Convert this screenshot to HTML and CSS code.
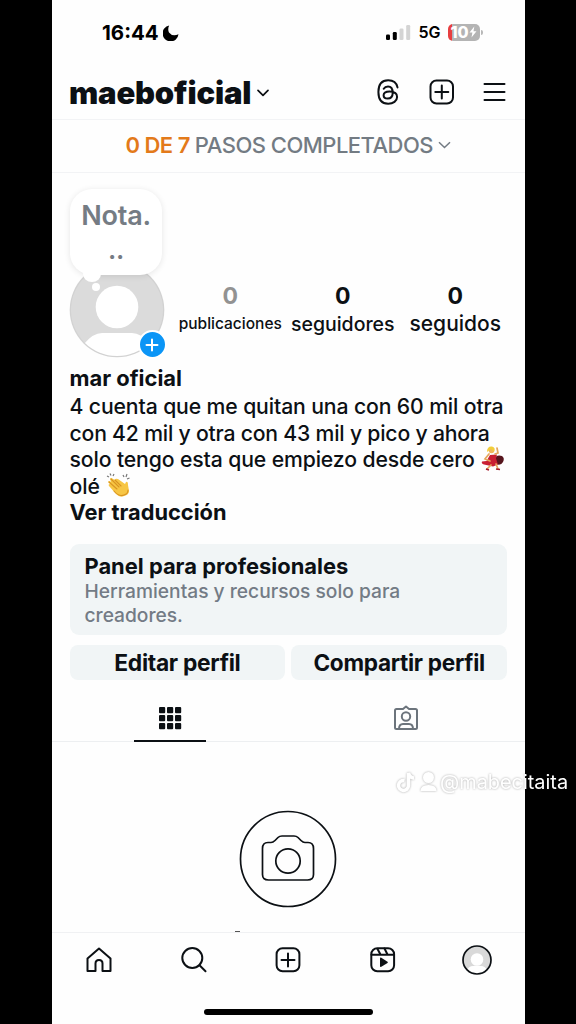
FILE: index.html
```html
<!DOCTYPE html>
<html lang="es">
<head>
<meta charset="utf-8">
<title>maeboficial</title>
<link rel="stylesheet" href="styles.css">
</head>
<body>
<main class="phone">
  <div class="status">
    <div class="clock"><span class="time">16:44</span>
      <svg class="moon" width="16" height="16" viewBox="0 0 16 16"><path d="M6.2.5A8 8 0 0 0 6 7.500Q9.500 12 15.500 9.300A8 8 0 1 1 6.200.5Z" fill="#000"/></svg>
    </div>
    <div class="signals">
      <svg width="25" height="17" viewBox="0 0 25 17"><rect x="0" y="10.500" width="4" height="5.500" rx="1.300" fill="#000"/><rect x="6.800" y="8" width="4" height="8" rx="1.300" fill="#000"/><rect x="13.500" y="4.500" width="4" height="11.500" rx="1.300" fill="#d4d4d4"/><rect x="20.200" y="1" width="4" height="15" rx="1.300" fill="#d4d4d4"/></svg>
      <span class="network">5G</span>
      <div class="battery"><span class="level">10</span><svg width="8" height="12" viewBox="0 0 8 12"><path d="M5.300.5.500 6.600h2.900L2.500 11.500 7.500 5.200H4.500Z" fill="#fff"/></svg></div>
      <span class="cap"></span>
    </div>
  </div>

  <header class="header">
    <h1 class="username">maeboficial</h1>
    <svg class="chevron" width="12" height="8" viewBox="0 0 12 8"><path d="M1 1.300 6 6.300l5-5" class="line"/></svg>
    <div class="actions">
      <svg width="22" height="26" viewBox="0 0 22 26"><path class="line bold" d="M20.500 8.400C19.500 3.600 16.300 1.300 11.200 1.300 4.700 1.300 1.400 5.500 1.400 13s3.300 11.700 9.800 11.700c5 0 8.900-2.500 8.900-6.600 0-3.500-3-5.500-7.500-5.500-4 0-6 1.500-6 3.700 0 2 1.700 3.300 4 3.300 3.300 0 5.100-2.200 5.100-5.800 0-4-1.500-6.300-4.700-6.300-1.900 0-3.400.8-4.300 2.200"/></svg>
      <svg width="26" height="26" viewBox="0 0 26 26"><rect class="line bold" x="1.500" y="1.500" width="22.500" height="23" rx="6"/><path class="line bold" d="M12.800 6.500v13M6.300 13h13"/></svg>
      <svg width="23" height="20" viewBox="0 0 23 20"><path class="line bold" d="M1.500 2h20M1.500 10h20M1.500 18h20"/></svg>
    </div>
  </header>

  <div class="steps"><span class="done">0 DE 7</span><span class="total">PASOS COMPLETADOS</span>
    <svg width="13" height="8" viewBox="0 0 13 8"><path d="M1 1.200 6.500 6.500 12 1.200" fill="none" stroke="#737b83" stroke-width="1.500"/></svg>
  </div>

  <section class="profile">
    <div class="summary">
      <div class="avatar">
        <svg width="96" height="96" viewBox="0 0 96 96"><defs><clipPath id="face"><circle cx="48" cy="48" r="46"/></clipPath></defs><circle cx="48" cy="48" r="47.300" fill="#d2d2d2"/><g clip-path="url(#face)"><circle cx="48" cy="48" r="46.500" fill="#dbdbdb"/><circle cx="48" cy="45" r="21.300" fill="#fff"/><path d="M15 82Q24 71 33 71h30q9 0 18 11L70 100H26Z" fill="#fff"/></g></svg>
        <div class="note"><span class="note-text">Nota.</span><span class="note-text dots">..</span></div>
        <span class="tail"></span><span class="bubble"></span>
        <span class="add"><svg width="14" height="14" viewBox="0 0 14 14"><path d="M7 1.500v11M1.500 7h11" stroke="#fff" stroke-width="2" stroke-linecap="round"/></svg></span>
      </div>
      <div class="stats">
        <div class="stat muted"><b>0</b><span class="label posts">publicaciones</span></div>
        <div class="stat"><b>0</b><span class="label followers">seguidores</span></div>
        <div class="stat"><b>0</b><span class="label following">seguidos</span></div>
      </div>
    </div>
    <h2 class="name">mar oficial</h2>
    <p class="bio"><span class="row l1">4 cuenta que me quitan una con 60 mil otra</span><span class="row l2">con 42 mil y otra con 43 mil y pico y ahora</span><span class="row l3">solo tengo esta que empiezo desde cero<svg class="emoji dancer" width="24" height="26" viewBox="0 0 24 26"><path d="M12 13Q16 8 21 10q3 2 1 6-2 4-7 2Z" fill="#56151d"/><path d="M9 9 5.500 15 1 15.500q-1 2 2 3l9 2 5-2-2-6 1-4Z" fill="#c91f32"/><path d="m8 8-4 5 5 2M14 8l3-1-1-5M15 18l2 5M10 19l-4 4" fill="none" stroke="#e4a55b" stroke-width="1.700" stroke-linecap="round"/><circle cx="10.500" cy="4.500" r="2.800" fill="#efb65d"/><path d="M6 6Q6 0 11 .5q4 1 2 5L10 3Z" fill="#f2ce3b"/><path d="m15 23 4 .5M5 23l3 1" stroke="#a5172a" stroke-width="1.600"/></svg></span><span class="row l4">olé<svg class="emoji clap" width="24" height="25" viewBox="0 0 24 25"><path d="M2 9q1-2 3 0L4 6q1-2 3 0l2 1q0-2 3-1l7 5 1-2q2-1 2 3l1 6q0 4-5 5-4 2-8-2l-7-8q-1-2 1-2Z" fill="#f7c644"/><path d="m3 9 8 7M5 6l8 8M9 7l6 6M8 18q5 6 10 4 4-1 4-5" fill="none" stroke="#d99423" stroke-width="1.100" stroke-linecap="round"/><path d="m1 3 2 1M4 .5l1 2M8 1 7 3M17 2l1 2M21 1l-1 3M23.500 5 21 6" stroke="#777" stroke-width="1.200"/></svg></span></p>
    <div class="translate">Ver traducción</div>
    <div class="panel"><h3 class="panel-title">Panel para profesionales</h3><p class="panel-copy"><span class="row p1">Herramientas y recursos solo para</span><span class="row p2">creadores.</span></p></div>
    <div class="buttons"><div class="button edit">Editar perfil</div><div class="button share">Compartir perfil</div></div>
  </section>

  <nav class="tabs">
    <div class="tab active"><svg width="24" height="24" viewBox="0 0 24 24" fill="#0c1014"><rect x="1" y="1" width="6.200" height="6.200" rx="1"/><rect x="9" y="1" width="6.200" height="6.200" rx="1"/><rect x="17" y="1" width="6.200" height="6.200" rx="1"/><rect x="1" y="9" width="6.200" height="6.200" rx="1"/><rect x="9" y="9" width="6.200" height="6.200" rx="1"/><rect x="17" y="9" width="6.200" height="6.200" rx="1"/><rect x="1" y="17" width="6.200" height="6.200" rx="1"/><rect x="9" y="17" width="6.200" height="6.200" rx="1"/><rect x="17" y="17" width="6.200" height="6.200" rx="1"/></svg></div>
    <div class="tab"><svg width="26" height="26" viewBox="0 0 26 26" fill="none" stroke="#6c747c" stroke-width="2" stroke-linejoin="round"><path d="M3.500 4H10l3-2.500L16 4h6.500Q24 4 24 5.500v17q0 1.500-1.500 1.500h-19Q2 24 2 22.500v-17Q2 4 3.500 4Z"/><circle cx="13" cy="11.500" r="4.200"/><path d="M6 24q0-5 4-5h6q4 0 4 5"/></svg></div>
  </nav>

  <section class="gallery"><svg width="98" height="98" viewBox="0 0 98 98"><circle class="line" cx="49" cy="49" r="47.500"/><path class="line" d="M29 32.500h3q2 0 4-2l3-3q1.500-1.500 4-1.500h12q2.500 0 4 1.500l3 3q2 2 4 2h3q5.500 0 5.500 6v26q0 5.500-6 5.500h-39q-6 0-6-5.500v-26q0-6 5.500-6Z"/><circle class="line" cx="49" cy="51" r="12.200"/></svg><span class="accent"></span></section>

  <nav class="bottom">
    <svg width="28" height="28" viewBox="0 0 28 28"><path class="line bold" d="M2.500 12.500 14 2.500l11.500 10V25h-8v-7.500q0-3.500-3.500-3.500t-3.500 3.500V25h-8Z"/></svg>
    <svg width="28" height="28" viewBox="0 0 28 28"><circle class="line bold" cx="12.300" cy="12" r="10"/><path class="line bold" d="m19.500 19.200 6 6"/></svg>
    <svg width="28" height="28" viewBox="0 0 28 28"><rect class="line bold" x="2.600" y="2.300" width="22.800" height="23" rx="6"/><path class="line bold" d="M14 7.500v13M7.500 14h13"/></svg>
    <svg width="28" height="28" viewBox="0 0 28 28"><rect class="line bold" x="2.300" y="2.300" width="22.800" height="23" rx="6"/><path class="line bold" d="M2.500 8.800h22.500M8.500 3l3 5.500M15.500 2.500l3 6"/><path d="M11 12.500q0-1.300 1.300-.7l6.200 4q.8.600 0 1.200l-6.200 3.800q-1.300.5-1.300-.7Z" fill="#0c1014"/></svg>
    <svg width="32" height="32" viewBox="0 0 32 32"><defs><clipPath id="mini"><circle cx="16" cy="16" r="14"/></clipPath></defs><g clip-path="url(#mini)"><circle cx="16" cy="16" r="14" fill="#d9d9d9"/><circle cx="16" cy="15.500" r="6.300" fill="#fff"/><path d="M5 27q3-5 7-5h8q4 0 7 5v5H5Z" fill="#fff"/></g><circle class="line" cx="16" cy="16" r="14"/></svg>
  </nav>
  <div class="home-area"><span class="home-bar"></span></div>
</main>
<div class="watermark">
  <svg width="42" height="24" viewBox="0 0 42 24" fill="#fff"><path d="M8.500 10.500a5 5 0 1 0 4 5V3q1.500 5 5.500 5" fill="none" stroke="#fff" stroke-width="3.500"/><circle cx="32.500" cy="7.500" r="5.500"/><path d="M24.500 21q0-6 8-6t8 6Z"/></svg>
  <span class="handle">@mabecitaita</span>
</div>
</body>
</html>
```
FILE: styles.css
```css
* { box-sizing: border-box; margin: 0; }
body { width: 576px; height: 1024px; overflow: hidden; position: relative; background: #000; color: #0c1014; font-family: Inter, "Liberation Sans", sans-serif; }
svg { display: block; flex: none; }
h1, h2, h3 { font-weight: 700; }
.line { fill: none; stroke: #0c1014; stroke-width: 1.700; stroke-linecap: round; stroke-linejoin: round; }
.bold { stroke-width: 2; }
.phone { width: 472.500px; height: 1024px; margin-left: 52px; background: #fefefe; display: flex; flex-direction: column; white-space: nowrap; }

.status { height: 66px; display: flex; justify-content: space-between; padding: 22px 42px 0 50px; color: #000; }
.clock { display: flex; height: 21px; align-items: center; gap: 4px; }
.time { font-size: 20.500px; font-weight: 700; }
.signals { display: flex; height: 20px; align-items: center; }
.network { font-size: 16px; font-weight: 600; margin: 0 7px 0 7px; }
.battery { width: 32px; height: 17px; border-radius: 5px; display: flex; align-items: center; justify-content: center; gap: 0; color: #fff; background: linear-gradient(90deg, #e73e40 4px, #b4b4b4 4px); }
.level { font-size: 16px; font-weight: 800; line-height: 17px; }
.cap { width: 2px; height: 5px; margin-left: 1px; border-radius: 0 2px 2px 0; background: #b8b8b8; }

.header { height: 54px; padding: 0 19px 2px 17px; display: flex; align-items: center; border-bottom: 1px solid #f2f3f5; }
.username { font-size: 31px; font-weight: 900; line-height: 38px; letter-spacing: -.18px; padding-top: 2px; }
.chevron { margin-left: 6px; margin-top: 2px; }
.actions { margin-left: auto; display: flex; align-items: center; gap: 29px; }
.actions svg + svg { margin-left: .5px; }
.actions svg + svg + svg { margin-left: -1px; }
.steps { height: 53px; padding-bottom: 2px; display: flex; align-items: center; justify-content: center; gap: 5px; font-size: 22px; letter-spacing: -.52px; font-weight: 500; border-bottom: 1px solid #f2f3f5; color: #737b83; }
.done { color: #e37a1a; font-weight: 600; }

.profile { padding: 0 17.500px; height: 507px; }
.summary { height: 190px; padding-top: 89px; display: flex; }
.avatar { width: 96px; height: 96px; position: relative; left: -1px; top: -.5px; flex: none; }
.note { position: absolute; left: 1.500px; top: -72.500px; width: 92px; height: 86px; border-radius: 22px; background: #fff; box-shadow: 0 1px 6px #0000001a; display: flex; flex-direction: column; align-items: center; padding-top: 9px; }
.note-text { font-size: 27px; line-height: 36px; font-weight: 600; letter-spacing: -.2px; color: #757c84; }
.dots { line-height: 32px; font-size: 26px; }
.tail { position: absolute; left: 14px; top: 4px; width: 18px; height: 16px; border-radius: 50%; background: #fff; }
.bubble { position: absolute; left: 23px; top: 21px; width: 8px; height: 8px; border-radius: 50%; background: #fff; }
.add { position: absolute; left: 69px; top: 68.500px; width: 29px; height: 29px; border: 2.500px solid #fff; border-radius: 50%; background: #0b95f6; display: flex; align-items: center; justify-content: center; }
.stats { width: 338px; margin-left: 8.500px; display: grid; grid-template-columns: repeat(3, 112.500px); padding-top: 19px; }
.stat { display: flex; flex-direction: column; align-items: center; font-size: 23px; line-height: 30px; }
.muted b { color: #929292; }
.label { font-weight: 500; line-height: 26px; }
.posts { font-size: 15.500px; }
.followers { font-size: 19.500px; }
.following { font-size: 21px; }
.name { font-size: 21.900px; line-height: 30px; }
.row { display: flex; }
.bio { font-size: 21.200px; line-height: 26.400px; font-weight: 500; padding-top: .3px; letter-spacing: -.12px; }
.l2 { letter-spacing: -.2px; }
.emoji { margin-left: 6px; }
.translate { font-size: 21.800px; font-weight: 700; line-height: 26.400px; }
.panel { height: 91px; margin-top: 18.700px; border-radius: 9px; padding: 9px 15px; background: #f1f5f6; }
.panel-title { font-size: 21.900px; line-height: 27px; }
.panel-copy { font-size: 19.200px; font-weight: 500; line-height: 23.500px; color: #737b85; }
.buttons { display: grid; grid-template-columns: 1fr 1fr; gap: 6px; margin-top: 10px; }
.button { height: 35px; display: flex; align-items: center; justify-content: center; border-radius: 8px; background: #f1f5f6; font-size: 22px; font-weight: 700; }
.edit { font-size: 22.800px; letter-spacing: -.3px; }
.share { font-size: 22.600px; letter-spacing: -.3px; }

.tabs { height: 62px; display: grid; grid-template-columns: 1fr 1fr; border-bottom: 1px solid #edeff1; }
.tab { height: 62px; width: 72px; justify-self: center; display: flex; justify-content: center; align-items: flex-start; padding-top: 25.500px; }
.tab + .tab { padding-top: 25px; }
.active { border-bottom: 2.500px solid #0c1014; }
.gallery { height: 190px; display: flex; justify-content: center; padding-top: 68px; position: relative; }
.accent { position: absolute; left: 183px; bottom: 0; width: 5px; height: 1px; background: #555; }
.bottom { height: 54px; border-top: 1px solid #f0f1f3; display: grid; grid-template-columns: repeat(5, 1fr); align-items: center; justify-items: center; }
.home-area { flex: 1; display: flex; justify-content: center; padding-top: 23px; }
.home-bar { width: 169px; height: 6px; border-radius: 3px; background: #000; }
.watermark { position: absolute; left: 396px; top: 769px; height: 26px; display: flex; align-items: center; gap: 2px; color: #fff; white-space: nowrap; filter: drop-shadow(0 0 1px #0005); }
.handle { font-size: 19.900px; font-weight: 400; }
```
